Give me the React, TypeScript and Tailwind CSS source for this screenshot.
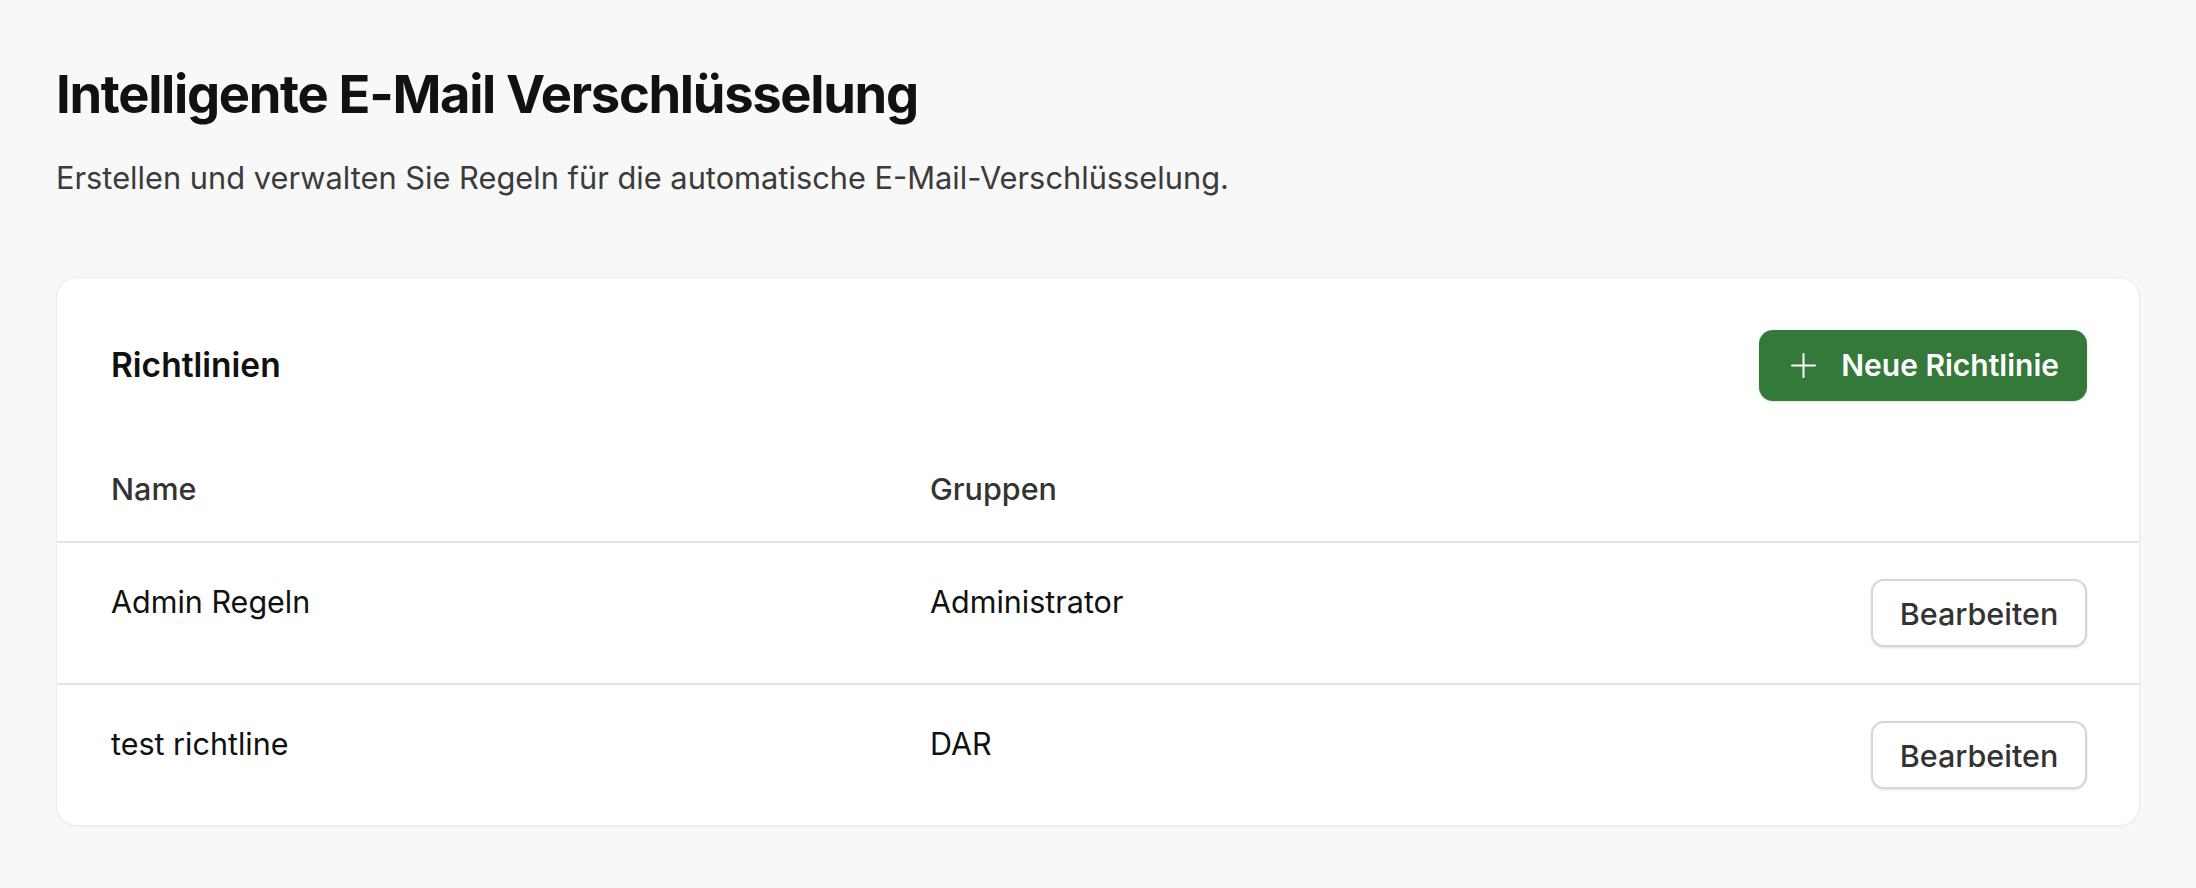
const policies = [
  { name: "Admin Regeln", groups: "Administrator" },
  { name: "test richtline", groups: "DAR" },
];

function PlusIcon() {
  return (
    <svg width="25" height="25" viewBox="0 0 25 25" fill="none" stroke="currentColor" strokeWidth="2" strokeLinecap="round">
      <path d="M12.5 1v23M1 12.5h23" />
    </svg>
  );
}

export default function App() {
  return (
    <div className="min-h-screen bg-[#f8f8f8] px-[56px] pt-[62px] pb-[60px] font-['Inter',sans-serif] antialiased">
      <h1 className="text-[52.5px] leading-[64px] font-bold tracking-tight text-[#111]">
        Intelligente E-Mail Verschlüsselung
      </h1>
      <p className="mt-[29px] text-[30.8px] leading-[45px] text-[#3b3b3b]">
        Erstellen und verwalten Sie Regeln für die automatische E-Mail-Verschlüsselung.
      </p>

      <section className="mt-[77px] bg-white rounded-[21px] border border-[#ededed] shadow-[0_1px_3px_rgba(0,0,0,0.05)] overflow-hidden">
        <div className="flex items-center justify-between pl-[54px] pr-[52px] pt-[52px]">
          <h2 className="text-[33.5px] leading-[45px] font-semibold text-[#111]">Richtlinien</h2>
          <button className="flex items-center gap-[25px] h-[71px] pl-[32px] pr-[28px] rounded-[14px] bg-[#34783a] text-white text-[30px] font-semibold shadow-sm">
            <PlusIcon />
            Neue Richtlinie
          </button>
        </div>

        <div className="mt-[36px] grid grid-cols-[819px_1fr_auto] pl-[54px] pr-[52px] pt-[29px] pb-[30px] border-b-2 border-[#e3e3e3] text-[30.5px] leading-[45px] font-medium text-[#333]">
          <div>Name</div>
          <div>Gruppen</div>
          <div />
        </div>

        {policies.map((p, i) => (
          <div
            key={p.name}
            className={
              "grid grid-cols-[819px_1fr_auto] items-start pl-[54px] pr-[52px] py-[36px] text-[30.5px] leading-[45px] text-[#111] " +
              (i < policies.length - 1 ? "border-b-2 border-[#e3e3e3]" : "")
            }
          >
            <div>{p.name}</div>
            <div>{p.groups}</div>
            <button className="h-[68px] w-[216px] rounded-[13px] border-2 border-[#d6d6d6] bg-white text-[30.5px] font-medium text-[#333] shadow-sm">
              Bearbeiten
            </button>
          </div>
        ))}
      </section>
    </div>
  );
}
